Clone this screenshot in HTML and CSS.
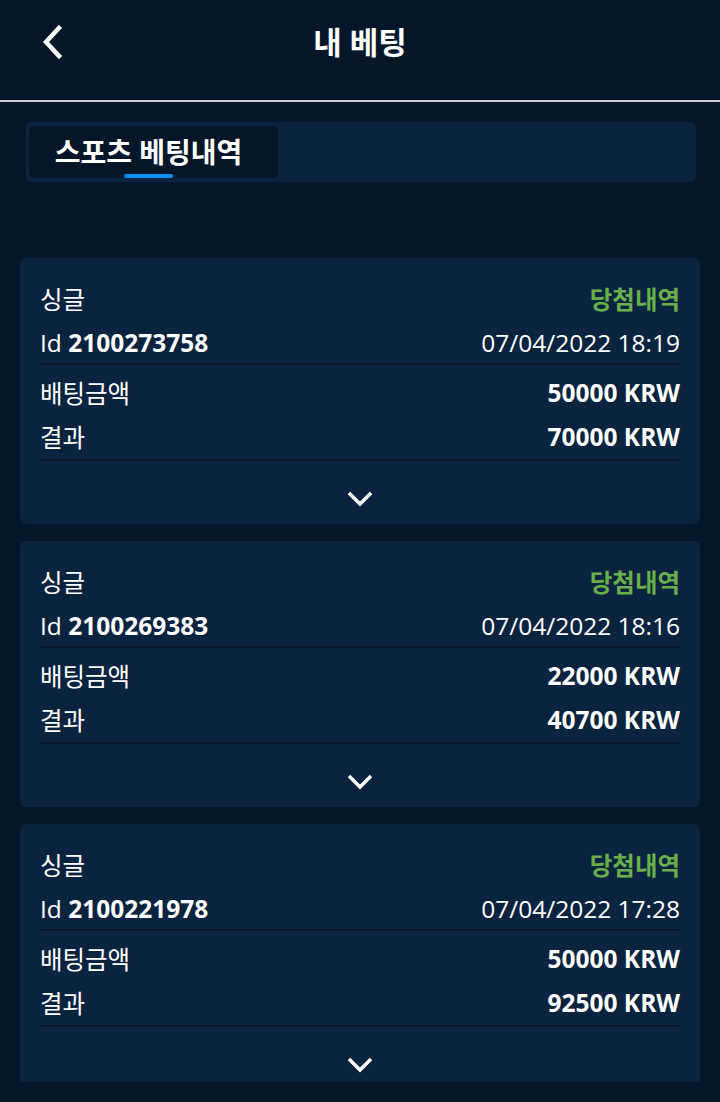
FILE: index.html
```html
<!DOCTYPE html>
<html lang="ko">
<head>
    <meta charset="UTF-8">
    <meta name="viewport" content="width=device-width, initial-scale=1.0">
    <title>내 베팅</title>
    <link rel="stylesheet" href="styles.css">
</head>
<body>
    <header class="topbar">
        <button class="back" aria-label="뒤로">
            <svg width="24" height="36" viewBox="0 0 24 36"><path d="M19 4 L6 18 L19 32" fill="none" stroke="#fff" stroke-width="4.5" stroke-linecap="square"/></svg>
        </button>
        <h1 class="title">내 베팅</h1>
        <span></span>
    </header>

    <nav class="tabs">
        <div class="tab active">
            <span class="tab-label">스포츠 베팅내역</span>
            <span class="tab-bar"></span>
        </div>
    </nav>

    <main class="bet-list">
        <div class="card">
            <div class="group">
                <div class="row"><span>싱글</span><span class="status">당첨내역</span></div>
                <div class="row"><span>Id <b>2100273758</b></span><span>07/04/2022 18:19</span></div>
            </div>
            <div class="group second">
                <div class="row"><span>배팅금액</span><b>50000 KRW</b></div>
                <div class="row"><span>결과</span><b>70000 KRW</b></div>
            </div>
            <div class="more">
                <svg width="28" height="16" viewBox="0 0 28 16"><path d="M3 2 L14 13 L25 2" fill="none" stroke="#fff" stroke-width="3.5"/></svg>
            </div>
        </div>

        <div class="card">
            <div class="group">
                <div class="row"><span>싱글</span><span class="status">당첨내역</span></div>
                <div class="row"><span>Id <b>2100269383</b></span><span>07/04/2022 18:16</span></div>
            </div>
            <div class="group second">
                <div class="row"><span>배팅금액</span><b>22000 KRW</b></div>
                <div class="row"><span>결과</span><b>40700 KRW</b></div>
            </div>
            <div class="more">
                <svg width="28" height="16" viewBox="0 0 28 16"><path d="M3 2 L14 13 L25 2" fill="none" stroke="#fff" stroke-width="3.5"/></svg>
            </div>
        </div>

        <div class="card">
            <div class="group">
                <div class="row"><span>싱글</span><span class="status">당첨내역</span></div>
                <div class="row"><span>Id <b>2100221978</b></span><span>07/04/2022 17:28</span></div>
            </div>
            <div class="group second">
                <div class="row"><span>배팅금액</span><b>50000 KRW</b></div>
                <div class="row"><span>결과</span><b>92500 KRW</b></div>
            </div>
            <div class="more">
                <svg width="28" height="16" viewBox="0 0 28 16"><path d="M3 2 L14 13 L25 2" fill="none" stroke="#fff" stroke-width="3.5"/></svg>
            </div>
        </div>
    </main>
</body>
</html>
```

FILE: styles.css
```css
body {
    margin: 0;
    background-color: #061629;
    color: #fff;
    font-family: "Open Sans", "Noto Sans CJK KR", sans-serif;
}
.topbar {
    display: grid;
    grid-template-columns: 1fr auto 1fr;
    align-items: start;
    height: 102px;
    box-sizing: border-box;
    padding-top: 22px;
    border-bottom: 2px solid #cfd0d2;
}
.back {
    justify-self: start;
    margin-left: 40px;
    margin-top: 2px;
    padding: 0;
    border: none;
    background: none;
    cursor: pointer;
}
.back svg {
    display: block;
}
.title {
    margin: 0;
    font-size: 31px;
    line-height: 40px;
    font-weight: bold;
}
.tabs {
    display: flex;
    margin: 20px 24px 0 26px;
    padding: 4px 3px;
    background-color: #0a233e;
    border-radius: 6px;
}
.tab {
    display: flex;
    flex-direction: column;
    align-items: center;
    width: 249px;
    height: 52px;
    box-sizing: border-box;
    padding: 6px 10px 0 0;
    background-color: #061629;
    border-radius: 5px;
}
.tab-label {
    font-size: 28px;
    line-height: 40px;
    font-weight: bold;
}
.tab-bar {
    width: 49px;
    height: 4px;
    margin-top: 2px;
    background-color: #0a8cf5;
    border-radius: 2px;
}
.bet-list {
    display: flex;
    flex-direction: column;
    gap: 17px;
    margin: 76px 20px 0;
    height: 824px;
    overflow: hidden;
}
.card {
    flex-shrink: 0;
    height: 266px;
    box-sizing: border-box;
    padding: 21px 20px 0;
    background-color: #0a233e;
    border-radius: 6px;
}
.group {
    display: flex;
    flex-direction: column;
    gap: 6px;
    padding-bottom: 2px;
    border-bottom: 2px solid #061629;
}
.group.second {
    padding-top: 8px;
    padding-bottom: 4px;
}
.row {
    display: flex;
    justify-content: space-between;
    align-items: center;
    height: 38px;
    font-size: 24.5px;
}
.row b {
    font-weight: bold;
}
.status {
    color: #69b04c;
    font-weight: bold;
}
.more {
    display: flex;
    justify-content: center;
    padding-top: 30px;
}
.more svg {
    display: block;
}
```
